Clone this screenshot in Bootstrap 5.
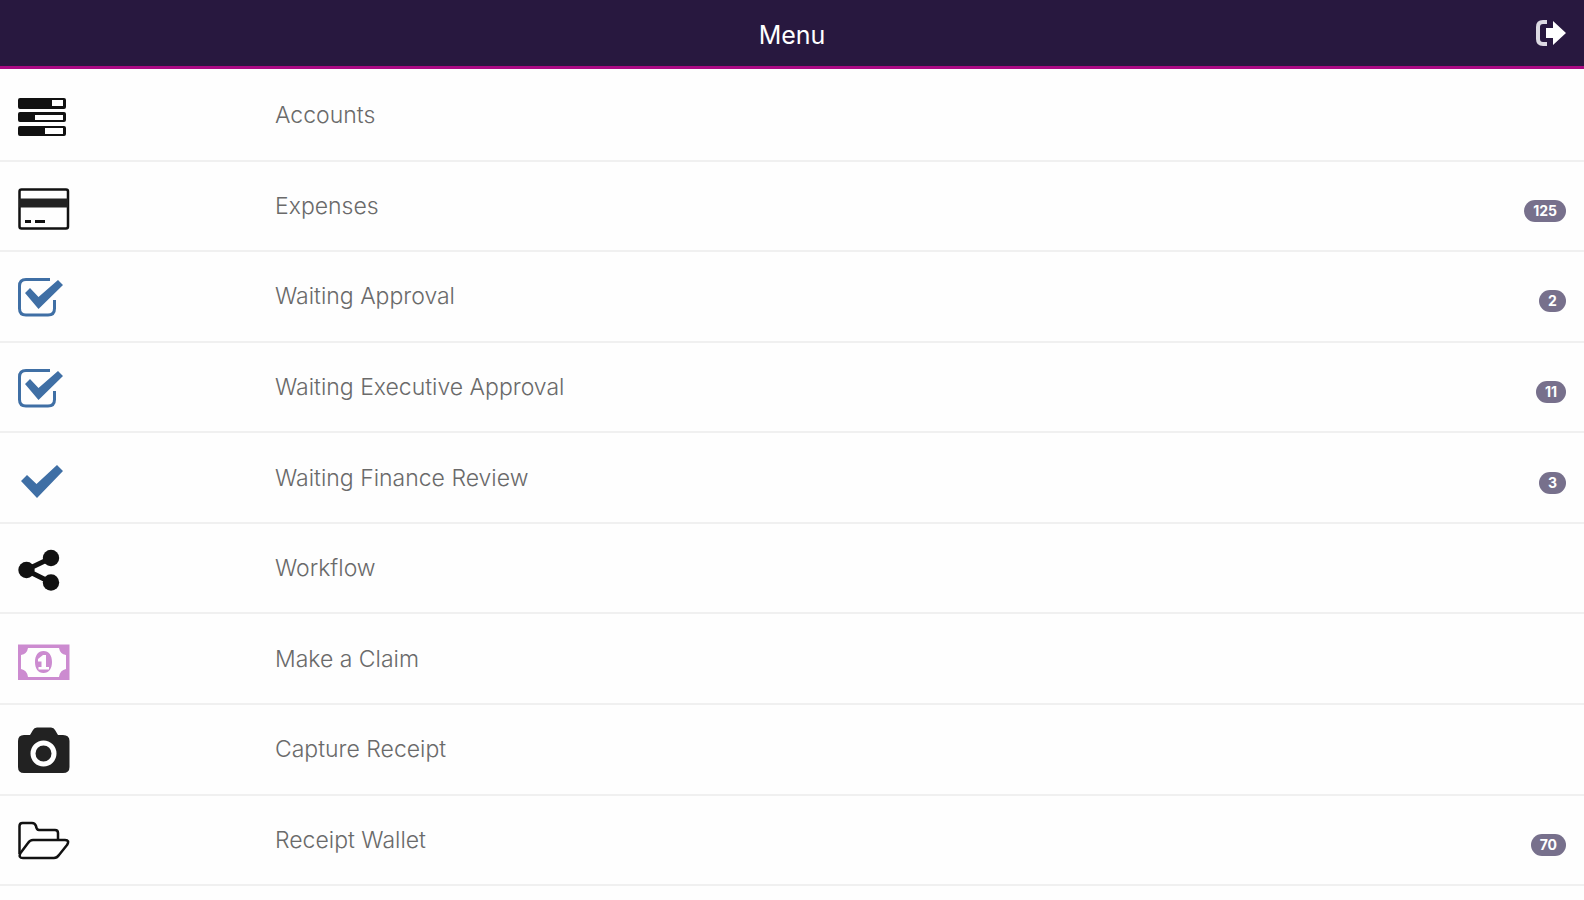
<!DOCTYPE html>
<html lang="en">
<head>
<meta charset="utf-8">
<meta name="viewport" content="width=device-width, initial-scale=1">
<title>Menu</title>
<link href="https://cdn.jsdelivr.net/npm/bootstrap@5.3.0/dist/css/bootstrap.min.css" rel="stylesheet">
<style>
  body { font-family: Inter, "Open Sans", sans-serif; background: #fefefe; }
  .app-header { background: #28183f; border-bottom: 3px solid #ab0a84; height: 69px; }
  .app-title { font-size: 25px; line-height: 32px; font-weight: 400; padding-top: 4px; }
  .side { width: 54px; }
  .menu-list { min-height: calc(100vh - 83px); padding-top: 2px; }
  .menu-item { border-bottom: 2px solid #f0f0f0; padding: 0 18px 0 0; color: #6a6a6a; font-size: 23px; line-height: 32px; font-weight: 300; background: #fefefe; }
  .menu-item:hover { background: #f8f8f8; color: #444; }
  .menu-icon { padding-left: 18px; color: #111; }
  .menu-icon svg { width: 54px; height: 54px; display: block; }
  .menu-icon.blue { color: #3f6fa5; }
  .menu-icon.pink { color: #cc8bd0; }
  .menu-label { padding-left: 14px; }
  .count { background: #77708c; color: #fff; font-size: 14px; line-height: 22px; font-weight: 700; padding: 0 9px; min-width: 27px; }
  .count-slot { padding-top: 10px; }
</style>
</head>
<body>
<header class="app-header d-flex align-items-center justify-content-between px-3">
  <span class="side"></span>
  <h1 class="app-title text-white m-0">Menu</h1>
  <button type="button" class="side btn p-0 border-0 text-end text-white" aria-label="Log out">
    <svg width="34" height="30" viewBox="0 0 34 30" fill="none"><path d="M13 4H9Q4 4 4 9V21Q4 26 9 26H13" stroke="#dcd9e2" stroke-width="4"/><path d="M12 10H19V3L32 15L19 27V20H12Z" fill="#fff"/></svg>
  </button>
</header>
<nav class="menu-list d-flex flex-column" aria-label="Menu">
  <a href="#accounts" class="menu-item row g-0 flex-fill align-items-center text-decoration-none">
    <span class="menu-icon col-2"><svg viewBox="0 0 54 54" fill="currentColor" fill-rule="evenodd"><path d="M2 10H46Q48 10 48 12V19Q48 21 46 21H2Q0 21 0 19V12Q0 10 2 10ZM34 12V18H45V12ZM2 24H46Q48 24 48 26V32Q48 34 46 34H2Q0 34 0 32V26Q0 24 2 24ZM17 27V32H45V27ZM2 38H46Q48 38 48 40V46Q48 48 46 48H2Q0 48 0 46V40Q0 38 2 38ZM27 40V46H45V40Z"/></svg></span>
    <span class="menu-label col">Accounts</span>
  </a>
  <a href="#expenses" class="menu-item row g-0 flex-fill align-items-center text-decoration-none">
    <span class="menu-icon col-2"><svg viewBox="0 0 54 54" fill="none" stroke="currentColor"><rect x="1.500" y="10.500" width="48.500" height="39" rx="2" stroke-width="2.500"/><path d="M1 24H50" stroke="#222" stroke-width="9"/><path d="M7 42.500H13M17 42.500H27" stroke-width="3"/></svg></span>
    <span class="menu-label col">Expenses</span>
    <span class="count-slot col-auto d-flex"><span class="count rounded-pill text-center">125</span></span>
  </a>
  <a href="#approval" class="menu-item row g-0 flex-fill align-items-center text-decoration-none">
    <span class="menu-icon blue col-2"><svg viewBox="0 0 54 54" fill="none"><path d="M32 10.500H8Q1.500 10.500 1.500 17V39.500Q1.500 46 8 46H30Q36.500 46 36.500 39.500V31" stroke="currentColor" stroke-width="3"/><path d="M7 24L12 19L20.500 28L40 11L45 16L20.500 40Z" fill="currentColor"/></svg></span>
    <span class="menu-label col">Waiting Approval</span>
    <span class="count-slot col-auto d-flex"><span class="count rounded-pill text-center">2</span></span>
  </a>
  <a href="#executive" class="menu-item row g-0 flex-fill align-items-center text-decoration-none">
    <span class="menu-icon blue col-2"><svg viewBox="0 0 54 54" fill="none"><path d="M32 10.500H8Q1.500 10.500 1.500 17V39.500Q1.500 46 8 46H30Q36.500 46 36.500 39.500V31" stroke="currentColor" stroke-width="3"/><path d="M7 24L12 19L20.500 28L40 11L45 16L20.500 40Z" fill="currentColor"/></svg></span>
    <span class="menu-label col">Waiting Executive Approval</span>
    <span class="count-slot col-auto d-flex"><span class="count rounded-pill text-center">11</span></span>
  </a>
  <a href="#finance" class="menu-item row g-0 flex-fill align-items-center text-decoration-none">
    <span class="menu-icon blue col-2"><svg viewBox="0 0 54 54" fill="currentColor"><path d="M3 30L9 24L18.500 33L39 14L45 20L19 47Z"/></svg></span>
    <span class="menu-label col">Waiting Finance Review</span>
    <span class="count-slot col-auto d-flex"><span class="count rounded-pill text-center">3</span></span>
  </a>
  <a href="#workflow" class="menu-item row g-0 flex-fill align-items-center text-decoration-none">
    <span class="menu-icon col-2"><svg viewBox="0 0 54 54" fill="currentColor"><path d="M33 17L8 29L33 41.500" fill="none" stroke="currentColor" stroke-width="5"/><circle cx="8.500" cy="29" r="8.200"/><circle cx="33" cy="17" r="8.200"/><circle cx="33" cy="41.500" r="8.200"/></svg></span>
    <span class="menu-label col">Workflow</span>
  </a>
  <a href="#claim" class="menu-item row g-0 flex-fill align-items-center text-decoration-none">
    <span class="menu-icon pink col-2"><svg viewBox="0 0 54 54" fill="currentColor" fill-rule="evenodd"><path d="M0 12.500H51.500V48H0ZM10 16Q9 22 3 23V37Q9 38 10 45H41Q42 38 48 37V23Q42 22 41 16Z"/><path d="M25.500 19C31 19 34 23.500 34 30S31 41 25.500 41S17 36.500 17 30S20 19 25.500 19ZM25 23L20 27V29.500H23.500V35H20.500V37.500H31V35H28V23Z"/></svg></span>
    <span class="menu-label col">Make a Claim</span>
  </a>
  <a href="#capture" class="menu-item row g-0 flex-fill align-items-center text-decoration-none">
    <span class="menu-icon col-2"><svg viewBox="0 0 54 54" fill="#222"><path d="M6 13H12L15 8Q16 5.500 19 5.500H33Q36 5.500 37 8L40 13H45Q51.500 13 51.500 19V45Q51.500 51 45 51H6Q0 51 0 45V19Q0 13 6 13Z"/><circle cx="25.500" cy="31.500" r="10.500" fill="none" stroke="#fff" stroke-width="5"/></svg></span>
    <span class="menu-label col">Capture Receipt</span>
  </a>
  <a href="#wallet" class="menu-item row g-0 flex-fill align-items-center text-decoration-none">
    <span class="menu-icon col-2"><svg viewBox="0 0 54 54" fill="none" stroke="currentColor" stroke-width="2.500" stroke-linejoin="round"><path d="M1.500 41V13Q1.500 10 4.500 10H14Q17 10 18 13Q18.500 17 21 17H37Q40 17 40 20V27"/><path d="M15 27H47Q52 27 49 32L41 42Q39 45 36 45H5Q0 45 2.500 40L10 30Q12 27 15 27Z"/></svg></span>
    <span class="menu-label col">Receipt Wallet</span>
    <span class="count-slot col-auto d-flex"><span class="count rounded-pill text-center">70</span></span>
  </a>
</nav>
<script src="https://cdn.jsdelivr.net/npm/bootstrap@5.3.0/dist/js/bootstrap.bundle.min.js"></script>
</body>
</html>
